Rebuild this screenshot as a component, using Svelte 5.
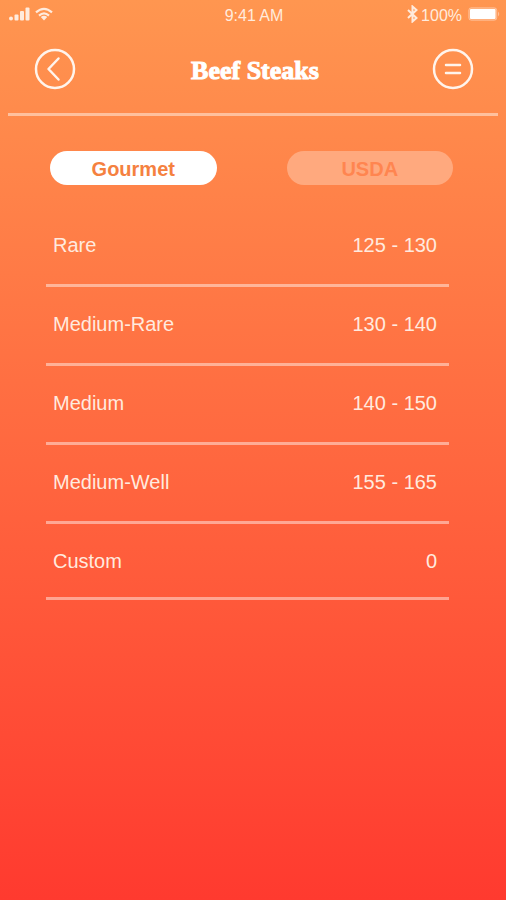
<script>
  const levels = {
    Gourmet: [
      ['Rare', '125 - 130'],
      ['Medium-Rare', '130 - 140'],
      ['Medium', '140 - 150'],
      ['Medium-Well', '155 - 165'],
      ['Custom', '0']
    ],
    USDA: [
      ['Rare', '145'],
      ['Medium', '160'],
      ['Well', '170'],
      ['Custom', '0']
    ]
  };
  let selected = $state('Gourmet');
</script>

<div class="screen">
  <div class="status">
    <div class="side">
      <svg width="22" height="14" viewBox="0 0 22 14" fill="currentColor" aria-hidden="true">
        <circle cx="3" cy="11.5" r="2" />
        <rect x="6.500" y="7.500" width="4" height="6" rx="1" />
        <rect x="12" y="4" width="4" height="9.500" rx="1" />
        <rect x="17.500" y="0.500" width="4" height="13" rx="1" />
      </svg>
      <svg width="18" height="14" viewBox="0 0 18 14" fill="none" stroke="currentColor" stroke-width="2.2" aria-hidden="true">
        <path d="M1 5.400Q9-1.700 17 5.400M4 8.600Q9 4.200 14 8.600" />
        <path d="M5.800 10Q9 7.600 12.200 10L9 13.500z" fill="currentColor" stroke="none" />
      </svg>
    </div>
    <span class="clock">9:41 AM</span>
    <div class="side right">
      <svg width="11" height="18" viewBox="0 0 11 18" fill="none" stroke="currentColor" stroke-width="2" aria-hidden="true">
        <path d="M1 5l8.500 8L5.500 16.500V1.500L9.500 5 1 13" />
      </svg>
      <span>100%</span>
      <svg class="battery" width="32" height="14" viewBox="0 0 32 14" aria-hidden="true">
        <rect x="0.750" y="0.750" width="28" height="12.500" rx="2.500" fill="#fff" fill-opacity=".2" stroke="#fff" stroke-opacity=".3" />
        <rect x="2" y="2" width="25.500" height="10" rx="1" fill="#fff" />
        <path d="M30 4.500q2.500 2.500 0 5z" fill="#fff" fill-opacity=".4" />
      </svg>
    </div>
  </div>

  <header>
    <button class="round" aria-label="Back">
      <svg width="42" height="42" viewBox="0 0 42 42" aria-hidden="true">
        <circle cx="21" cy="21" r="19" />
        <path d="M24.500 10.500L14.500 21l10 10.500" />
      </svg>
    </button>
    <h1>Beef Steaks</h1>
    <button class="round" aria-label="Menu">
      <svg width="42" height="42" viewBox="0 0 42 42" aria-hidden="true">
        <circle cx="21" cy="21" r="19" />
        <path d="M14 17h14M14 25h14" />
      </svg>
    </button>
  </header>

  <main>
    <div class="tabs">
      {#each Object.keys(levels) as name}
        <button class="tab" class:active={selected === name} aria-pressed={selected === name} onclick={() => (selected = name)}>
          {name}
        </button>
      {/each}
    </div>
    <table>
      <tbody>
        {#each levels[selected] as [name, range]}
          <tr><th scope="row">{name}</th><td>{range}</td></tr>
        {/each}
      </tbody>
    </table>
  </main>
</div>

<style>
  :global(body) {
    margin: 0;
  }
  .screen {
    box-sizing: border-box;
    min-height: 100vh;
    background: linear-gradient(#ff9650, #ff3a2f);
    color: #fff;
    font-family: "Liberation Sans", Arial, sans-serif;
    font-size: 20px;
  }
  .status {
    display: flex;
    align-items: center;
    height: 28px;
    padding: 0 6px 0 8px;
    color: #ffebdd;
    font: 16px/24px "Liberation Sans", Arial, sans-serif;
  }
  .side {
    display: flex;
    flex: 1;
    align-items: center;
    gap: 5px;
  }
  .right {
    justify-content: flex-end;
    gap: 3px;
  }
  .clock,
  .right span {
    padding-top: 4px;
  }
  .battery {
    margin-left: 3px;
  }
  header {
    display: flex;
    align-items: center;
    justify-content: space-between;
    box-sizing: border-box;
    height: 85px;
    margin: 0 8px;
    padding: 0 24px 4px 26px;
  }
  h1 {
    margin: 0;
    padding: 4px 0 0 2px;
    font: bold 26px/32px "Liberation Serif", "Times New Roman", serif;
    -webkit-text-stroke: 1px #fff;
  }
  button {
    border: 0;
    padding: 0;
    background: none;
    color: inherit;
    font: inherit;
    cursor: pointer;
  }
  .round svg {
    display: block;
    fill: none;
    stroke: #fff4ec;
    stroke-width: 2.5;
    stroke-linecap: round;
    stroke-linejoin: round;
  }
  main {
    margin: 0 8px;
    padding: 35px 49px 0 38px;
    border-top: 3px solid #ffc09d;
  }
  .tabs {
    display: grid;
    grid-template-columns: 1fr 1fr;
    gap: 70px;
    margin: 0 -4px 0 4px;
  }
  .tab {
    height: 34px;
    padding-top: 2px;
    border-radius: 17px;
    background: #ffa97e;
    color: #ff8550;
    font-weight: bold;
  }
  .tab.active {
    background: #fff;
    color: #f5813f;
  }
  table {
    width: 100%;
    margin-top: 23px;
    border-spacing: 0;
  }
  th,
  td {
    height: 74px;
    padding: 0 0 2px;
    border-bottom: 3px solid rgba(255, 255, 255, 0.45);
    color: #ffeadf;
    line-height: 24px;
  }
  th {
    padding-left: 7px;
    font-weight: normal;
    text-align: left;
  }
  td {
    padding-right: 12px;
    text-align: right;
  }
  tr:last-child > * {
    height: 73px;
    padding-bottom: 0;
  }
</style>
